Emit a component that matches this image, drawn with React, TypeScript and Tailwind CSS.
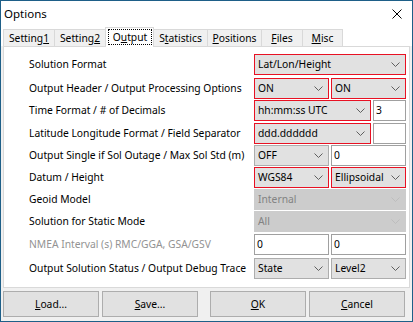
import React from 'react';

const FONT = { fontFamily: '"Noto Sans", "Open Sans", sans-serif' };

const Chevron = ({ color = '#5f5f5f' }: { color?: string }) => (
  <svg width="9" height="5" viewBox="0 0 9 5" className="shrink-0">
    <polyline points="0.5,0.5 4.5,4.5 8.5,0.5" fill="none" stroke={color} strokeWidth="1" />
  </svg>
);

const Combo = ({ value, red = false, disabled = false, w = 'flex-1' }: any) => (
  <div
    className={`${w} h-full flex items-center justify-between pl-[3px] pr-[5px] border ${
      disabled
        ? 'bg-[#cccccc] border-[#cccccc] text-[#838383]'
        : red
        ? 'bg-[#e1e1e1] border-[#e81123] text-black'
        : 'bg-[#e1e1e1] border-[#adadad] text-black'
    }`}
  >
    <span>{value}</span>
    <Chevron color={disabled ? '#bdbdbd' : '#5f5f5f'} />
  </div>
);

const Input = ({ value = '', w = 'flex-1' }: any) => (
  <div className={`${w} h-full flex items-center pl-[2px] bg-white border border-[#a0a0a0] text-black`}>
    {value}
  </div>
);

const Row = ({ label, mt = '', dim = false, children }: any) => (
  <div className={`flex items-center h-[21px] ${mt}`}>
    <div className={`flex-1 pl-[25px] ${dim ? 'text-[#939393]' : 'text-black'}`}>{label}</div>
    <div className="w-[152px] h-full flex gap-[2px]">{children}</div>
  </div>
);

const Tab = ({ children, w }: any) => (
  <div className={`${w} h-[17px] flex items-center justify-center bg-[#f0f0f0] border border-b-0 border-[#d9d9d9] -ml-px first:ml-0`}>
    {children}
  </div>
);

const Btn = ({ children }: any) => (
  <button className="w-[96px] h-[26px] flex items-center justify-center bg-[#e1e1e1] border border-[#adadad] text-black">
    {children}
  </button>
);

export default function App() {
  return (
    <div
      className="w-[413px] h-[322px] flex flex-col bg-[#f0f0f0] border border-[#1e5f88] text-[10.3px] leading-none overflow-hidden"
      style={FONT}
    >
      {/* title bar */}
      <div className="h-[25px] shrink-0 flex items-center justify-between bg-white pl-[3px] pr-[10px]">
        <span className="text-[11.5px] text-black">Options</span>
        <svg width="10" height="10" viewBox="0 0 10 10">
          <line x1="0.5" y1="0.5" x2="9.5" y2="9.5" stroke="#000" strokeWidth="1" />
          <line x1="9.5" y1="0.5" x2="0.5" y2="9.5" stroke="#000" strokeWidth="1" />
        </svg>
      </div>

      {/* tab strip */}
      <div className="h-[20px] shrink-0 flex items-end bg-white pl-[2px]">
        <Tab w="w-[52px]">Setting<span className="underline">1</span></Tab>
        <Tab w="w-[52px]">Setting<span className="underline">2</span></Tab>
        <div className="w-[49px] h-[20px] -ml-px -mb-px z-10 flex bg-white border border-b-0 border-[#d9d9d9] pl-[2px] pr-[1px] pt-[1px] pb-[2px]">
          <div className="flex-1 flex items-center justify-center border border-dotted border-black">
            O<span className="underline">u</span>tput
          </div>
        </div>
        <Tab w="w-[55px]">S<span className="underline">t</span>atistics</Tab>
        <Tab w="w-[55px]"><span className="underline">P</span>ositions</Tab>
        <Tab w="w-[42px]"><span className="underline">F</span>iles</Tab>
        <Tab w="w-[41px]"><span className="underline">M</span>isc</Tab>
      </div>

      {/* panel */}
      <div className="h-[242px] shrink-0 ml-[2px] w-[407px] bg-white border border-[#d9d9d9] pt-[7px] pr-[3px]">
        <Row label="Solution Format">
          <Combo value="Lat/Lon/Height" red />
        </Row>
        <Row label="Output Header / Output Processing Options" mt="mt-[3px]">
          <Combo value="ON" red w="w-[75px]" />
          <Combo value="ON" red w="w-[75px]" />
        </Row>
        <Row label="Time Format / # of Decimals" mt="mt-[1px]">
          <Combo value="hh:mm:ss UTC" red w="w-[117px]" />
          <Input value="3" w="w-[33px]" />
        </Row>
        <Row label="Latitude Longitude Format / Field Separator" mt="mt-[2px]">
          <Combo value="ddd.dddddd" red w="w-[117px]" />
          <Input w="w-[33px]" />
        </Row>
        <Row label="Output Single if Sol Outage / Max Sol Std (m)" mt="mt-[1px]">
          <Combo value="OFF" w="w-[75px]" />
          <Input value="0" w="w-[75px]" />
        </Row>
        <Row label="Datum / Height" mt="mt-[1px]">
          <Combo value="WGS84" red w="w-[75px]" />
          <Combo value="Ellipsoidal" red w="w-[75px]" />
        </Row>
        <Row label="Geoid Model" mt="mt-[1px]">
          <Combo value="Internal" disabled />
        </Row>
        <Row label="Solution for Static Mode" mt="mt-[1px]">
          <Combo value="All" disabled />
        </Row>
        <Row label="NMEA Interval (s) RMC/GGA, GSA/GSV" mt="mt-[2px]" dim>
          <Input value="0" w="w-[75px]" />
          <Input value="0" w="w-[75px]" />
        </Row>
        <Row label="Output Solution Status / Output Debug Trace" mt="mt-[3px]">
          <Combo value="State" w="w-[75px]" />
          <Combo value="Level2" w="w-[75px]" />
        </Row>
      </div>

      {/* buttons */}
      <div className="mt-[3px] flex justify-between pl-[2px] pr-[7px]">
        <div className="flex gap-[3px]">
          <Btn><span className="underline">L</span>oad...</Btn>
          <Btn><span className="underline">S</span>ave...</Btn>
        </div>
        <div className="flex gap-[3px]">
          <Btn><span className="underline">O</span>K</Btn>
          <Btn><span className="underline">C</span>ancel</Btn>
        </div>
      </div>
    </div>
  );
}
